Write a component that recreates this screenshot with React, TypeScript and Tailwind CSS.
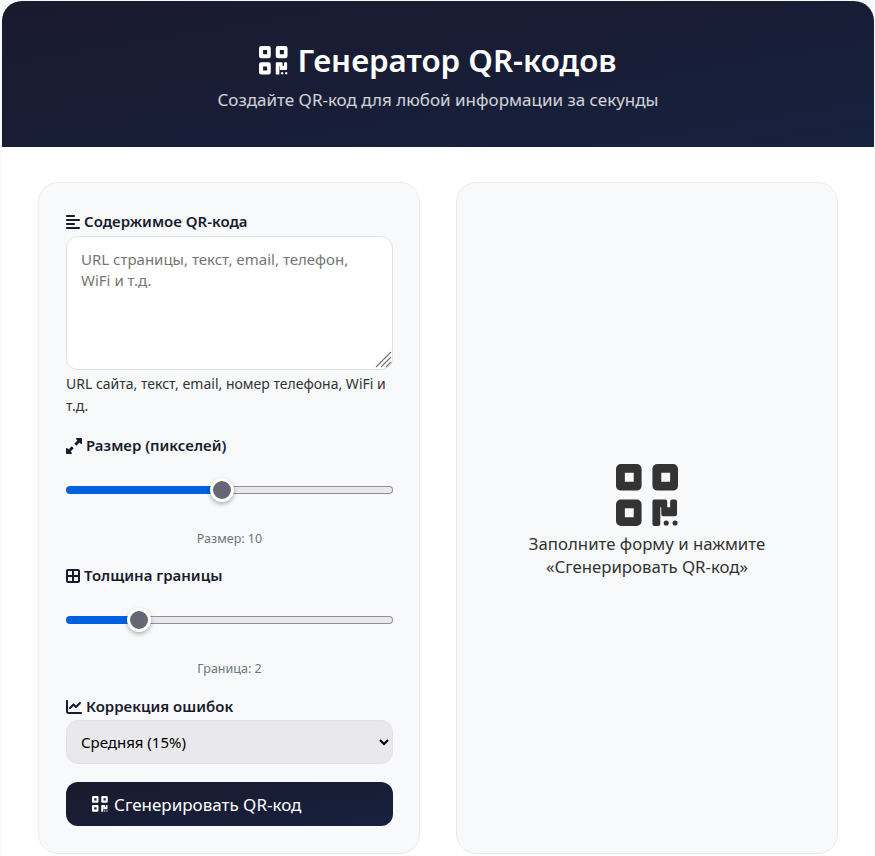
import { FaAlignLeft, FaBorderAll, FaChartLine, FaUpRightAndDownLeftFromCenter } from "react-icons/fa6";

const FONT = "font-['Noto_Sans','Open_Sans',sans-serif]";

const RANGE_CLASS =
  "block w-full h-2 my-0 appearance-none rounded-full border border-transparent [&::-webkit-slider-thumb]:appearance-none [&::-webkit-slider-thumb]:w-6 [&::-webkit-slider-thumb]:h-6 [&::-webkit-slider-thumb]:rounded-full [&::-webkit-slider-thumb]:bg-[#666677] [&::-webkit-slider-thumb]:border-[3px] [&::-webkit-slider-thumb]:border-white [&::-webkit-slider-thumb]:shadow-[0_2px_4px_rgba(0,0,0,0.3)]";

// Rounded QR glyph, three finder squares and the broken corner
function QrIcon({ className }: { className?: string }) {
  const ring = (x: number, y: number) =>
    `M${x + 5} ${y}h16a5 5 0 0 1 5 5v17a5 5 0 0 1-5 5h-16a5 5 0 0 1-5-5v-17a5 5 0 0 1 5-5zM${x + 9} ${y + 9}v9h9v-9z`;
  return (
    <svg viewBox="0 0 64 64" fill="currentColor" className={className}>
      <path fillRule="evenodd" d={ring(0, 0)} />
      <path fillRule="evenodd" d={ring(37, 0)} />
      <path fillRule="evenodd" d={ring(0, 36)} />
      <path d="M37 38a2 2 0 0 1 2-2h11a2 2 0 0 1 2 2v6h3v-6a2 2 0 0 1 2-2h3a2 2 0 0 1 2 2v13a2 2 0 0 1-2 2h-12a2 2 0 0 1-2-2v-7h-1v17a2 2 0 0 1-2 2h-4a2 2 0 0 1-2-2z" />
      <circle cx="51" cy="60" r="2.6" />
      <circle cx="60" cy="60" r="2.6" />
    </svg>
  );
}

function Label({ icon, children }: { icon: React.ReactNode; children: React.ReactNode }) {
  return (
    <label className="flex items-center gap-1 h-6 text-[15px] font-semibold text-[#1a1a2e]">
      {icon}
      <span className="pb-[2px]">{children}</span>
    </label>
  );
}

function SliderField({ value, min, max, caption }: { value: number; min: number; max: number; caption: string }) {
  // fill follows the value, 327px track with a 24px thumb
  const fill = 12 + ((value - min) / (max - min)) * 303;
  return (
    <div className="pt-[28px]">
      <input
        type="range"
        min={min}
        max={max}
        defaultValue={value}
        className={RANGE_CLASS}
        style={{
          background: `linear-gradient(#0060df,#0060df) 0 0/${fill}px 100% no-repeat border-box, linear-gradient(#e9e9ed,#e9e9ed) padding-box, linear-gradient(#8f8f9d,#8f8f9d) border-box`,
        }}
      />
      <p className="mt-[35px] text-center text-[12.5px] leading-[20px] text-[#6c757d]">{caption}</p>
    </div>
  );
}

export default function App() {
  return (
    <div className={`${FONT} h-[856px] overflow-hidden bg-[#f8f9fa] pl-[2px] pt-px`}>
      <div className="w-[872px] rounded-t-[20px] bg-white overflow-hidden">
        <header className="flex h-[146px] flex-col items-center justify-center bg-gradient-to-br from-[#1a1a2e] to-[#16213e] pt-[3px] text-white">
          <h1 className="flex items-center gap-[9px] text-[31.3px] font-semibold leading-[44px]">
            <QrIcon className="h-[29px] w-[29px]" />
            Генератор QR-кодов
          </h1>
          <p className="mt-[5px] text-[17px] leading-[26px] text-white/80">
            Создайте QR-код для любой информации за секунды
          </p>
        </header>

        <div className="grid grid-cols-2 gap-9 p-9 pt-[35px]">
          <section className="h-[672px] rounded-[20px] border border-[#e9ecef] bg-[#f8f9fa] pl-[27px] pr-[26px] pt-[27px]">
            <Label icon={<FaAlignLeft className="h-4 w-[14px]" />}>Содержимое QR-кода</Label>
            <div className="relative mt-[2px]">
              <textarea
                placeholder="URL страницы, текст, email, телефон, WiFi и т.д."
                className="block h-[134px] w-full resize-none rounded-xl border border-[#dee2e6] bg-white px-[14px] pb-[11px] pt-[12px] text-[15px] leading-[21px] placeholder:text-[#757575] outline-none"
              />
              <svg viewBox="0 0 17 17" className="absolute bottom-[2px] right-[1px] h-[17px] w-[17px] stroke-[#777]" strokeWidth="1.2">
                <path d="M1 16 16 1M6 16 16 6M11 16l5-5" />
              </svg>
            </div>
            <p className="mt-[3px] mb-[17px] text-[14px] leading-[22px] text-[#333]">
              URL сайта, текст, email, номер телефона, WiFi и т.д.
            </p>
            <Label icon={<FaUpRightAndDownLeftFromCenter className="h-4 w-4" />}>Размер (пикселей)</Label>
            <SliderField value={10} min={1} max={20} caption="Размер: 10" />
            <div className="mt-[15px]">
              <Label icon={<FaBorderAll className="h-4 w-[14px]" />}>Толщина границы</Label>
            </div>
            <SliderField value={2} min={0} max={10} caption="Граница: 2" />
            <div className="mt-[16px]">
              <Label icon={<FaChartLine className="h-4 w-4" />}>Коррекция ошибок</Label>
            </div>
            <select
              defaultValue="M"
              className="mt-[1px] block h-11 w-full rounded-xl border border-[#e2e2e8] bg-[#e9e9ed] pl-[10px] pr-[14px] text-[15px] text-black"
            >
              <option value="L">Низкая (7%)</option>
              <option value="M">Средняя (15%)</option>
              <option value="Q">Высокая (25%)</option>
              <option value="H">Максимальная (30%)</option>
            </select>
            <button className="mt-[18px] flex h-11 w-full items-center gap-[6px] rounded-xl bg-gradient-to-br from-[#1a1a2e] to-[#16213e] pl-[26px] text-[17px] text-white">
              <QrIcon className="h-4 w-4" />
              <span className="pt-[2px]">Сгенерировать QR-код</span>
            </button>
          </section>

          <section className="flex h-[672px] flex-col items-center justify-center rounded-[20px] border border-[#e9ecef] bg-[#f8f9fa] pt-[6px] text-[#333]">
            <QrIcon className="h-[63px] w-[63px]" />
            <p className="mt-[5px] text-center text-[16.8px] leading-[23px]">
              Заполните форму и нажмите
              <br />
              «Сгенерировать QR-код»
            </p>
          </section>
        </div>
      </div>
    </div>
  );
}
